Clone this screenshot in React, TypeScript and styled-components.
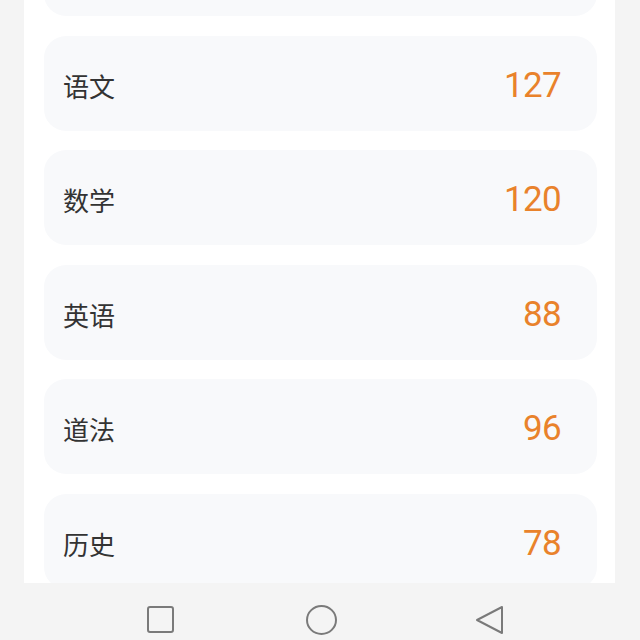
import React from 'react';
import styled, { createGlobalStyle } from 'styled-components';

const Global = createGlobalStyle`
  html, body { margin: 0; padding: 0; background: #f4f4f4; }
  #root { height: 640px; }
`;

const Screen = styled.div`
  width: 640px;
  height: 640px;
  display: flex;
  flex-direction: column;
  overflow: hidden;
  background: #f4f4f4;
`;

const Viewport = styled.div`
  flex: none;
  height: 583px;
  padding: 0 25px 0 24px;
  box-sizing: border-box;
`;

const Panel = styled.div`
  height: 100%;
  background: #ffffff;
  overflow: hidden;
  padding: 0 18px 0 20px;
`;

const List = styled.div`
  display: flex;
  flex-direction: column;
  gap: 19.5px;
  margin-top: -79px;
`;

const Card = styled.div`
  flex: none;
  height: 95px;
  box-sizing: border-box;
  border-radius: 22px;
  background: #f8f9fb;
  display: flex;
  align-items: center;
  justify-content: space-between;
  padding: 5px 36px 0 19px;
`;

const Subject = styled.span`
  font-family: "Noto Sans CJK SC", "Noto Sans", sans-serif;
  font-size: 26px;
  line-height: 30px;
  color: #333333;
`;

const Score = styled.span`
  font-family: Roboto, "Liberation Sans", sans-serif;
  font-size: 35px;
  line-height: 40px;
  letter-spacing: -0.7px;
  color: #e9822b;
`;

const NavBar = styled.div`
  flex: 1;
  display: flex;
  align-items: flex-start;
  padding: 22px 0 0 147px;
  box-sizing: border-box;
`;

const NavKey = styled.svg<{ $ml: number }>`
  flex: none;
  margin-left: ${(p) => p.$ml}px;
  fill: none;
  stroke: #7a7a7a;
  stroke-width: 2;
  stroke-linejoin: round;
`;

const scores = [
  { name: '语文', value: 127 },
  { name: '数学', value: 120 },
  { name: '英语', value: 88 },
  { name: '道法', value: 96 },
  { name: '历史', value: 78 },
];

export default function App() {
  return (
    <>
      <Global />
      <Screen>
        <Viewport>
          <Panel>
            <List>
              <Card aria-hidden="true" />
              {scores.map((s) => (
                <Card key={s.name}>
                  <Subject>{s.name}</Subject>
                  <Score>{s.value}</Score>
                </Card>
              ))}
            </List>
          </Panel>
        </Viewport>
        <NavBar>
          <NavKey $ml={0} width={28} height={30} viewBox="0 0 28 30">
            <rect x={1} y={2} width={25} height={25} rx={2} />
          </NavKey>
          <NavKey $ml={131} width={32} height={30} viewBox="0 0 32 30">
            <ellipse cx={15.5} cy={15} rx={14.5} ry={14} />
          </NavKey>
          <NavKey $ml={137} width={30} height={30} viewBox="0 0 30 30">
            <path d="M2 15 L27 2 L27 28 Z" />
          </NavKey>
        </NavBar>
      </Screen>
    </>
  );
}
